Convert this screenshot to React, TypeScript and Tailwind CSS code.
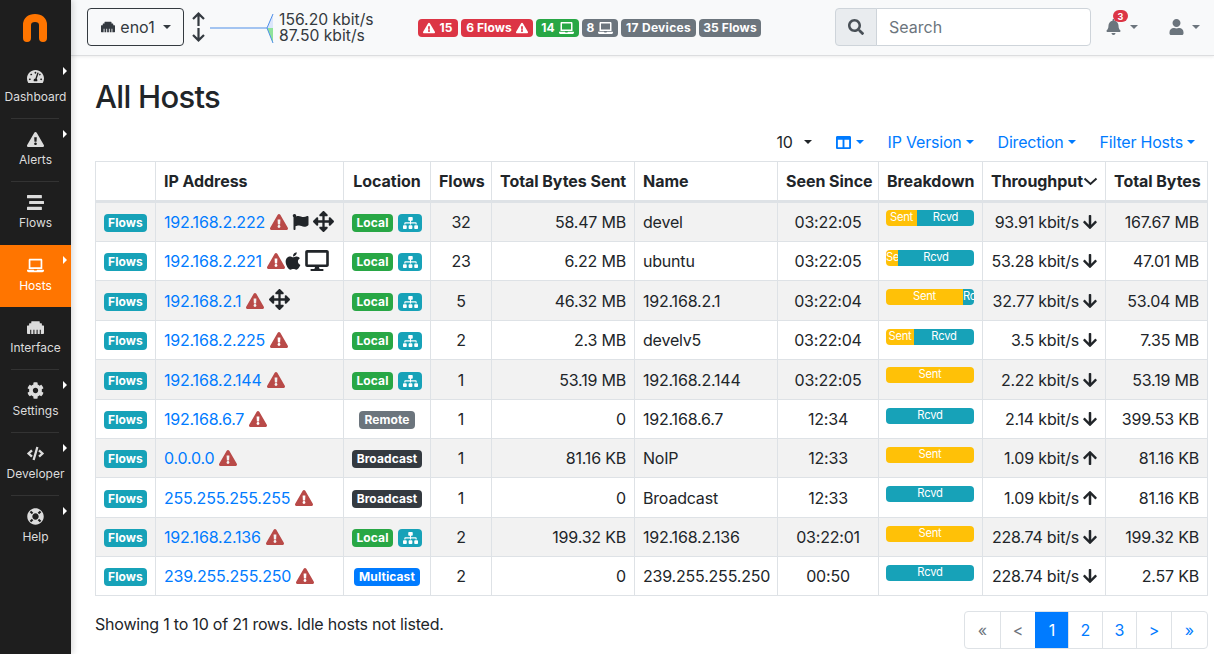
import React from "react";
import {
  FaTachometerAlt, FaExclamationTriangle, FaStream, FaLaptop, FaEthernet, FaCog, FaCode, FaLifeRing,
  FaBell, FaUser, FaSearch, FaFlag, FaArrowsAlt, FaApple, FaDesktop, FaSitemap, FaArrowDown, FaArrowUp,
  FaColumns,
} from "react-icons/fa";

const nav = [
  { icon: FaTachometerAlt, label: "Dashboard", arrow: true, line: true },
  { icon: FaExclamationTriangle, label: "Alerts", arrow: true, line: true },
  { icon: FaStream, label: "Flows", arrow: false, line: false },
  { icon: FaLaptop, label: "Hosts", arrow: true, line: false, active: true },
  { icon: FaEthernet, label: "Interface", arrow: false, line: true },
  { icon: FaCog, label: "Settings", arrow: true, line: true },
  { icon: FaCode, label: "Developer", arrow: true, line: true },
  { icon: FaLifeRing, label: "Help", arrow: true, line: false },
];

function Caret({ className = "" }: { className?: string }) {
  return <span className={"inline-block w-0 h-0 border-x-[4.8px] border-x-transparent border-t-[4.8px] " + className} />;
}

function Sidebar() {
  return (
    <aside className="w-[71px] shrink-0 bg-[#1e1e1e] flex flex-col shadow-[2px_0_6px_rgba(0,0,0,0.15)] z-10">
      <div className="h-[56px] flex items-center justify-center">
        <svg width="24" height="28" viewBox="0 0 24 28" className="-mt-[1px] -ml-[1px]">
          <path d="M4 24V11C4 6.5 7 4 12 4S20 6.5 20 11V24" fill="none" stroke="#ff7500" strokeWidth="8" strokeLinecap="round" />
        </svg>
      </div>
      {nav.map((n) => {
        const Icon = n.icon;
        return (
          <div key={n.label} className={"relative h-[62.86px] shrink-0 flex flex-col items-center pt-[12px] " + (n.active ? "bg-[#ff7500] text-white" : "text-[#dcdcdc]")}>
            <Icon className="h-[17px] w-auto" />
            <span className="text-[12px] leading-[18px] mt-[3px] whitespace-nowrap">{n.label}</span>
            {n.arrow && <span className="absolute right-[4px] top-[11px] w-0 h-0 border-y-[4px] border-y-transparent border-l-[4px] border-l-white" />}
            {n.line && <span className="absolute left-[11px] right-[12px] bottom-0 h-px bg-[#333333]" />}
          </div>
        );
      })}
    </aside>
  );
}

function Badge({ color, children, className = "" }: { color: string; children: React.ReactNode; className?: string }) {
  return (
    <span className={"inline-flex items-center justify-center gap-[4px] h-[18px] px-[5px] rounded-[4px] text-white text-[12px] font-bold leading-none tracking-[0.1px] whitespace-nowrap " + color + " " + className}>
      {children}
    </span>
  );
}

function TopBar() {
  return (
    <header className="h-[56px] shrink-0 bg-[#f8f9fa] border-b border-[#dcdddf] shadow-[0_1px_3px_rgba(0,0,0,0.08)] flex items-center pl-[16px] pb-[1px] text-[#343a40]">
      <button className="w-[97px] h-[38px] border border-[#343a40] rounded-[4px] flex items-center justify-center gap-[4px] text-[16px] text-[#343a40]">
        <FaEthernet className="w-[16px] h-[14px]" />
        <span>eno1</span>
        <Caret className="border-t-[#343a40] ml-[4px]" />
      </button>
      <svg width="15" height="30" viewBox="0 0 15 30" className="ml-[7px]" fill="none" stroke="#343a40" strokeWidth="2.2">
        <path d="M7.5 14V2M2 7L7.5 1.6L13 7" />
        <path d="M7.5 16V28M2 23L7.5 28.4L13 23" />
      </svg>
      <svg width="64" height="34" viewBox="0 0 64 34" className="ml-[4px] mt-[1px] shrink-0">
        <path d="M0 17 H57 L63 3 V17 Z" fill="#dbe6fb" />
        <path d="M57 17 L63 32 V17 Z" fill="#8fe39a" />
        <path d="M0 17 H57 L63 3 M57 17 L63 32" fill="none" stroke="#4f8fe8" strokeWidth="1" />
      </svg>
      <div className="ml-[5px] mt-[1px] text-[15.7px] leading-[16px] w-[128px] text-[#343a40]">
        <div>156.20 kbit/s</div>
        <div>87.50 kbit/s</div>
      </div>
      <div className="flex items-center gap-[3px] ml-[11px] mt-[2px]">
        <Badge color="bg-[#dc3545] w-[40px] !px-0"><FaExclamationTriangle className="w-[12px] h-[12px]" />15</Badge>
        <Badge color="bg-[#dc3545] w-[72px] !px-0">6 Flows<FaExclamationTriangle className="w-[12px] h-[12px]" /></Badge>
        <Badge color="bg-[#28a745] w-[43px] !px-0">14<FaLaptop className="w-[15px] h-[12px]" /></Badge>
        <Badge color="bg-[#6c757d] w-[36px] !px-0">8<FaLaptop className="w-[15px] h-[12px]" /></Badge>
        <Badge color="bg-[#6c757d] w-[75px] !px-0 tracking-[0.3px]">17 Devices</Badge>
        <Badge color="bg-[#6c757d] w-[62px] !px-0">35 Flows</Badge>
      </div>
      <div className="ml-auto flex items-center h-[38px] w-[256px]">
        <div className="w-[42px] h-full flex items-center justify-center bg-[#e9ecef] border border-[#ced4da] rounded-l-[4px]">
          <FaSearch className="w-[16px] h-[16px] text-[#495057]" />
        </div>
        <div className="flex-1 h-full -ml-px bg-white border border-[#ced4da] rounded-r-[4px] flex items-center pl-[12px] text-[16px] text-[#6c757d]">Search</div>
      </div>
      <div className="relative flex items-center ml-[15px] text-[#6c757d]">
        <FaBell className="w-[15px] h-[16px]" />
        <Caret className="border-t-[#6c757d] ml-[9px]" />
        <span className="absolute left-[7px] -top-[9px] w-[15px] h-[12px] rounded-full bg-[#dc3545] text-white text-[9px] font-bold flex items-center justify-center leading-none">3</span>
      </div>
      <div className="flex items-center ml-[31px] mr-[14px] text-[#6c757d]">
        <FaUser className="w-[15px] h-[16px]" />
        <Caret className="border-t-[#6c757d] ml-[8px]" />
      </div>
    </header>
  );
}

type Row = {
  ip: string; icons: React.ReactNode; loc: "local" | "remote" | "broadcast" | "multicast"; h: string;
  flows: string; sent: string; name: string; since: string; bar: number; tp: string; up?: boolean; total: string;
};

const tri = <FaExclamationTriangle className="w-[18px] h-[16px] text-[#b94a48] shrink-0" />;
const move = (ml: string) => <FaArrowsAlt className={"w-[21px] h-[21px] text-[#212529] shrink-0 -mt-[2px] " + ml} />;

const rows: Row[] = [
  { h: "h-[40px]", ip: "192.168.2.222", icons: <>{tri}<FaFlag className="w-[17px] h-[16px] text-[#212529] ml-[4px] shrink-0" />{move("ml-[4px]")}</>, loc: "local", flows: "32", sent: "58.47 MB", name: "devel", since: "03:22:05", bar: 31, tp: "93.91 kbit/s", total: "167.67 MB" },
  { h: "h-[39px]", ip: "192.168.2.221", icons: <>{tri}<FaApple className="w-[16px] h-[20px] text-[#212529] shrink-0" /><FaDesktop className="w-[24px] h-[21px] text-[#212529] ml-[4px] -mt-[1px] shrink-0" /></>, loc: "local", flows: "23", sent: "6.22 MB", name: "ubuntu", since: "03:22:05", bar: 12, tp: "53.28 kbit/s", total: "47.01 MB" },
  { h: "h-[40px]", ip: "192.168.2.1", icons: <>{tri}{move("ml-[5px]")}</>, loc: "local", flows: "5", sent: "46.32 MB", name: "192.168.2.1", since: "03:22:04", bar: 77, tp: "32.77 kbit/s", total: "53.04 MB" },
  { h: "h-[39px]", ip: "192.168.2.225", icons: tri, loc: "local", flows: "2", sent: "2.3 MB", name: "develv5", since: "03:22:04", bar: 28, tp: "3.5 kbit/s", total: "7.35 MB" },
  { h: "h-[40px]", ip: "192.168.2.144", icons: tri, loc: "local", flows: "1", sent: "53.19 MB", name: "192.168.2.144", since: "03:22:05", bar: 88, tp: "2.22 kbit/s", total: "53.19 MB" },
  { h: "h-[39px]", ip: "192.168.6.7", icons: tri, loc: "remote", flows: "1", sent: "0", name: "192.168.6.7", since: "12:34", bar: 0, tp: "2.14 kbit/s", total: "399.53 KB" },
  { h: "h-[39px]", ip: "0.0.0.0", icons: tri, loc: "broadcast", flows: "1", sent: "81.16 KB", name: "NoIP", since: "12:33", bar: 88, tp: "1.09 kbit/s", up: true, total: "81.16 KB" },
  { h: "h-[40px]", ip: "255.255.255.255", icons: tri, loc: "broadcast", flows: "1", sent: "0", name: "Broadcast", since: "12:33", bar: 0, tp: "1.09 kbit/s", up: true, total: "81.16 KB" },
  { h: "h-[39px]", ip: "192.168.2.136", icons: tri, loc: "local", flows: "2", sent: "199.32 KB", name: "192.168.2.136", since: "03:22:01", bar: 88, tp: "228.74 bit/s", total: "199.32 KB" },
  { h: "h-[39px]", ip: "239.255.255.250", icons: tri, loc: "multicast", flows: "2", sent: "0", name: "239.255.255.250", since: "00:50", bar: 0, tp: "228.74 bit/s", total: "2.57 KB" },
];

function Breakdown({ sent }: { sent: number }) {
  const rcvd = 88 - sent;
  return (
    <div className="flex w-[88px] h-[16px] -ml-[1px] rounded-[4px] overflow-hidden text-white text-[11.2px] leading-[15px]">
      {sent > 0 && <div className="bg-[#ffc107] text-center overflow-hidden whitespace-nowrap shrink-0" style={{ width: sent }}>Sent</div>}
      {rcvd > 0 && <div className="bg-[#17a2b8] text-center overflow-hidden whitespace-nowrap shrink-0" style={{ width: rcvd }}>Rcvd</div>}
    </div>
  );
}

function Location({ loc }: { loc: Row["loc"] }) {
  if (loc === "local")
    return (
      <div className="flex items-center justify-center gap-[5px] mt-[2px]">
        <Badge color="bg-[#28a745]" className="w-[41px] !px-0">Local</Badge>
        <Badge color="bg-[#17a2b8]" className="w-[24px] !px-0"><FaSitemap className="w-[15px] h-[12px]" /></Badge>
      </div>
    );
  if (loc === "remote") return <div className="flex justify-center mt-[2px]"><Badge color="bg-[#6c757d]" className="w-[56px] !px-0">Remote</Badge></div>;
  if (loc === "broadcast") return <div className="flex justify-center mt-[2px]"><Badge color="bg-[#343a40]" className="w-[71px] !px-0">Broadcast</Badge></div>;
  return <div className="flex justify-center mt-[2px]"><Badge color="bg-[#007bff]" className="w-[66px] !px-0">Multicast</Badge></div>;
}

const th = "border border-[#dee2e6] border-b-[3px] px-[8px] text-left font-bold text-[16px] tracking-[-0.05px] whitespace-nowrap";
const td = "border border-[#dee2e6] px-[8px] py-0 text-[16px] whitespace-nowrap";

function HostTable() {
  return (
    <table className="table-fixed border-collapse w-[1112px] text-[#212529] tracking-[-0.2px]">
      <colgroup>
        {[60, 188, 87, 61, 143, 143, 101, 104, 123, 102].map((w, i) => <col key={i} style={{ width: w }} />)}
      </colgroup>
      <thead>
        <tr className="h-[40px]">
          <th className={th} />
          <th className={th}>IP Address</th>
          <th className={th + " !text-center"}>Location</th>
          <th className={th + " !text-center"}>Flows</th>
          <th className={th + " !text-center"}>Total Bytes Sent</th>
          <th className={th}>Name</th>
          <th className={th + " !text-center"}>Seen Since</th>
          <th className={th + " !text-center"}>Breakdown</th>
          <th className={th}>
            <span className="flex items-center">Throughput
              <svg width="15" height="9" viewBox="0 0 15 9" className="shrink-0"><path d="M1.5 1.5 L7.5 7 L13.5 1.5" fill="none" stroke="#212529" strokeWidth="2" /></svg>
            </span>
          </th>
          <th className={th + " !text-right"}>Total Bytes</th>
        </tr>
      </thead>
      <tbody>
        {rows.map((r, i) => (
          <tr key={r.ip} className={r.h + " " + (i % 2 === 0 ? "bg-[#f2f2f2]" : "bg-white")}>
            <td className={td + " text-center"}><div className="flex justify-center mt-[2px]"><Badge color="bg-[#17a2b8]" className="w-[46px] !px-0">Flows</Badge></div></td>
            <td className={td}><div className="flex items-center gap-[5px]"><span className="text-[#007bff]">{r.ip}</span><span className="flex items-center">{r.icons}</span></div></td>
            <td className={td}><Location loc={r.loc} /></td>
            <td className={td + " text-center"}>{r.flows}</td>
            <td className={td + " text-right"}>{r.sent}</td>
            <td className={td}>{r.name}</td>
            <td className={td + " text-center"}>{r.since}</td>
            <td className={td + " !align-top " + (i === 0 || i === 4 ? "pt-[7px]" : "pt-[8px]")}><Breakdown sent={r.bar} /></td>
            <td className={td + " text-right"}>
              <div className="flex items-center justify-end gap-[3px] -mr-[1px]">{r.tp}{r.up ? <FaArrowUp className="w-[16px] h-[16px] shrink-0" /> : <FaArrowDown className="w-[16px] h-[16px] shrink-0" />}</div>
            </td>
            <td className={td + " text-right"}>{r.total}</td>
          </tr>
        ))}
      </tbody>
    </table>
  );
}

function Pagination() {
  const items = [["«", 35, "g"], ["<", 35, "g"], ["1", 33, "a"], ["2", 34, "b"], ["3", 34, "b"], [">", 35, "b"], ["»", 36, "b"]] as const;
  return (
    <div className="flex h-[38px] -mr-[1px] border border-[#dee2e6] rounded-[4px] overflow-hidden">
      {items.map(([t, w, k], i) => (
        <div key={i} style={{ width: w }} className={"flex items-center justify-center text-[16px] " + (i > 0 ? "border-l border-[#dee2e6] " : "") + (k === "a" ? "bg-[#007bff] text-white border-l-[#007bff]" : k === "g" ? "text-[#6c757d]" : "text-[#007bff]")}>{t}</div>
      ))}
    </div>
  );
}

export default function App() {
  return (
    <div className="flex h-screen w-screen overflow-hidden bg-white font-[Inter,sans-serif]">
      <Sidebar />
      <div className="flex-1 min-w-0 flex flex-col">
        <TopBar />
        <main className="pl-[24px] pr-[7px] flex-1 min-h-0">
          <h1 className="text-[31px] leading-[38px] font-medium text-[#212529] mt-[22px] tracking-[-0.7px]">All Hosts</h1>
          <div className="flex items-center justify-end h-[24px] mt-[14px] mb-[7px] text-[16px] tracking-[-0.2px] text-[#007bff] pr-[12px]">
            <span className="text-[#212529]">10</span>
            <Caret className="border-t-[#212529] ml-[11px]" />
            <FaColumns className="w-[17px] h-[15px] ml-[23px]" />
            <Caret className="border-t-[#007bff] ml-[4px]" />
            <span className="ml-[24px]">IP Version</span>
            <Caret className="border-t-[#007bff] ml-[4px]" />
            <span className="ml-[24px]">Direction</span>
            <Caret className="border-t-[#007bff] ml-[4px]" />
            <span className="ml-[24px]">Filter Hosts</span>
            <Caret className="border-t-[#007bff] ml-[4px]" />
          </div>
          <HostTable />
          <div className="flex items-center justify-between mt-[15px]">
            <span className="text-[16px] text-[#212529] tracking-[-0.2px] -mt-[12px]">Showing 1 to 10 of 21 rows. Idle hosts not listed.</span>
            <Pagination />
          </div>
        </main>
      </div>
    </div>
  );
}
